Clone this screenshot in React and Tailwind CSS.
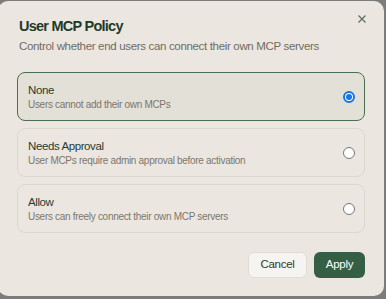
import React, { useState } from 'react';

const options = [
    { id: 'none', label: 'None', desc: 'Users cannot add their own MCPs' },
    { id: 'approval', label: 'Needs Approval', desc: 'User MCPs require admin approval before activation' },
    { id: 'allow', label: 'Allow', desc: 'Users can freely connect their own MCP servers' },
];

const Radio = ({ checked }) => (
    checked ? (
        <span className="w-3 h-3 rounded-full border-2 border-[#1a73e8] bg-white flex items-center justify-center">
            <span className="w-[6px] h-[6px] rounded-full bg-[#1a73e8]" />
        </span>
    ) : (
        <span className="w-3 h-3 rounded-full border border-[#767676] bg-white" />
    )
);

const App = () => {
    const [policy, setPolicy] = useState('none');

    return (
        <div className="w-[386px] h-[299px] overflow-hidden bg-[#7d7c7a] font-['Liberation_Sans',Arial,sans-serif]">
            <div className="ml-[-2px] mt-px w-[386px] h-[295px] bg-[#ebe7e0] rounded-[10px] pl-[21px] pr-[19px] pt-[15px] flex flex-col">
                <div className="flex justify-between items-start">
                    <h2 className="text-[14.5px] leading-5 font-bold tracking-[-0.75px] text-[#1f3a2b]">User MCP Policy</h2>
                    <button className="w-[8px] h-[8px] mt-[-1px] mr-[-1px] text-[#5f6b62]">
                        <svg width="8" height="8" viewBox="0 0 8 8" fill="none" stroke="currentColor" strokeWidth="1.2">
                            <path d="M0.5 0.5l7 7M7.5 0.5l-7 7" />
                        </svg>
                    </button>
                </div>
                <p className="text-[11.5px] leading-5 tracking-[-0.33px] text-[#6f6b64]">Control whether end users can connect their own MCP servers</p>

                <div className="mt-[16px] flex flex-col gap-[7px] ml-[-2px]">
                    {options.map(opt => {
                        const checked = policy === opt.id;
                        return (
                            <label
                                key={opt.id}
                                onClick={() => setPolicy(opt.id)}
                                className={`h-[49px] rounded-lg border flex items-center justify-between pl-[10px] pr-[9px] cursor-pointer ${checked ? 'border-[#4b6e52] bg-[#e3e0d8]' : 'border-[#ddd8cf] bg-[#ebe7e0]'}`}
                            >
                                <div className="flex flex-col">
                                    <span className="text-[11.5px] leading-4 tracking-[-0.4px] text-[#2a3a30]">{opt.label}</span>
                                    <span className="text-[10px] leading-[13px] tracking-[-0.3px] text-[#7c766d]">{opt.desc}</span>
                                </div>
                                <Radio checked={checked} />
                            </label>
                        );
                    })}
                </div>

                <div className="mt-auto mb-[18px] flex justify-end gap-[7px]">
                    <button className="h-[26px] w-[59px] rounded-md border border-[#e0dcd4] bg-[#f6f4f0] text-[11.5px] tracking-[-0.3px] text-[#2e3a32]">Cancel</button>
                    <button className="h-[26px] w-[51px] rounded-md bg-[#355f44] text-[11.5px] tracking-[-0.3px] text-white">Apply</button>
                </div>
            </div>
        </div>
    );
};

export default App;
